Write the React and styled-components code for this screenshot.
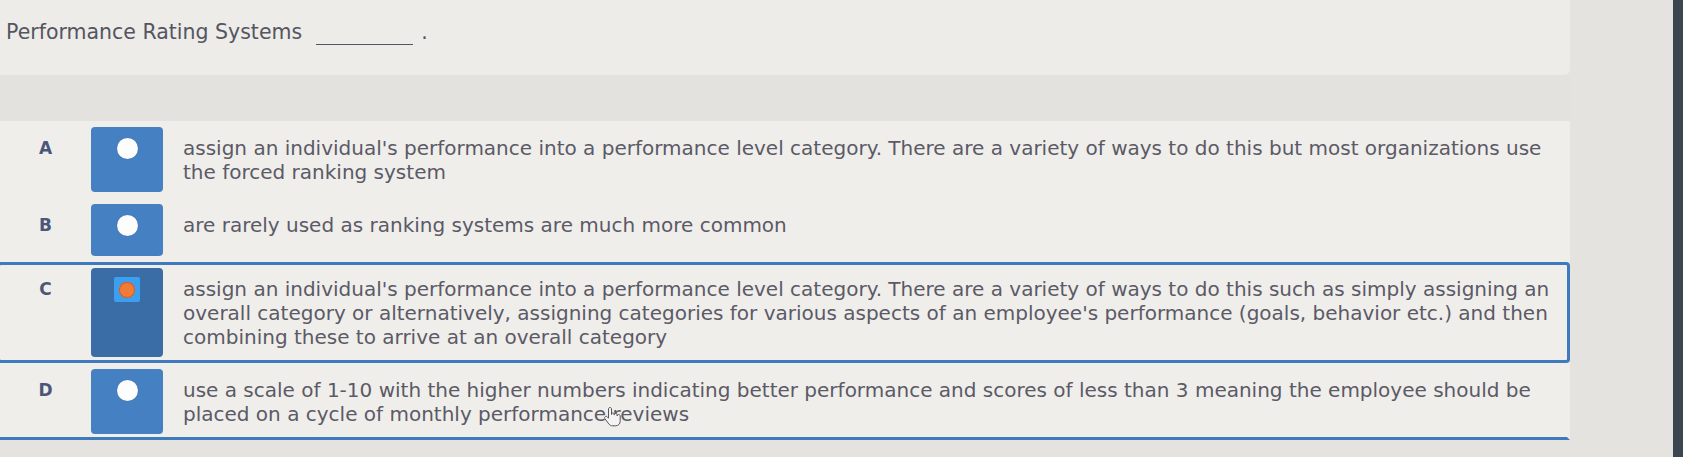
import styled, { createGlobalStyle } from "styled-components"

const GlobalStyle = createGlobalStyle`
    html, body {
        margin: 0;
        padding: 0;
        background: #e4e3df;
    }
    body {
        font-family: "DejaVu Sans", Verdana, sans-serif;
    }
`

const Screen = styled.div`
    display: flex;
    width: 1683px;
    height: 457px;
    overflow: hidden;
    background: #e4e3df;
`

const Main = styled.main`
    position: relative;
    width: 1570px;
    display: flex;
    flex-direction: column;
`

const Margin = styled.div`
    flex: 1;
`

const Bezel = styled.div`
    width: 10px;
    background: #3b4651;
`

const TitleCard = styled.header`
    height: 75px;
    box-sizing: border-box;
    padding: 21px 0 0 6px;
    background: #edece9;
    border-bottom-right-radius: 6px;
    color: #55555f;
    font-size: 20.5px;
    line-height: 23px;
`

const Blank = styled.span`
    display: inline-block;
    width: 97px;
    margin: 0 8px 0 14px;
    border-bottom: 1px solid #55555f;
`

const Band = styled.div`
    height: 46px;
    background: #e3e2de;
`

const List = styled.ul`
    list-style: none;
    margin: 0 0 0 -3px;
    padding: 0;
`

const Row = styled.li`
    display: grid;
    grid-template-columns: 91px 72px 1fr;
    padding: 3px 0;
    background: #efeeeb;
    border: 3px solid ${(p) => (p.$selected ? "#3d7bbd" : "transparent")};
    border-bottom-color: ${(p) => (p.$selected || p.$focused ? "#3d7bbd" : "transparent")};
    border-radius: ${(p) => (p.$selected ? "4px" : "0")};
    box-shadow: ${(p) => (p.$divider ? "0 1px 0 #d5d4d0" : "none")};
`

const Letter = styled.span`
    padding-top: 9px;
    text-align: center;
    font-size: 17px;
    line-height: 24px;
    font-weight: bold;
    color: #4b5779;
`

const Choice = styled.div`
    display: flex;
    justify-content: center;
    align-items: flex-start;
    min-height: 52px;
    padding-top: ${(p) => (p.$checked ? "9px" : "11px")};
    box-sizing: border-box;
    border-radius: 4px;
    background: ${(p) => (p.$checked ? "#3a6da6" : "#4580c3")};
`

const Dot = styled.span`
    width: 21px;
    height: 21px;
    border-radius: 50%;
    background: #fdfdfd;
    box-shadow: 0 0 1px rgba(0, 0, 0, 0.25);
`

const CheckedFrame = styled.span`
    display: flex;
    align-items: center;
    justify-content: center;
    width: 26px;
    height: 25px;
    border-radius: 2px;
    background: #3d9ff0;
`

const CheckedDot = styled.span`
    width: 16px;
    height: 16px;
    border-radius: 50%;
    background: #f47a38;
    box-shadow: inset 0 0 0 1px #c9602c;
`

const Text = styled.p`
    margin: 0;
    padding: 9px 0 8px 20px;
    font-size: 20px;
    line-height: 24px;
    color: #5b5a66;
`

const Cursor = styled.svg`
    position: absolute;
    left: 604px;
    top: 406px;
`

const options = [
    {
        letter: "A",
        lines: [
            "assign an individual's performance into a performance level category. There are a variety of ways to do this but most organizations use",
            "the forced ranking system",
        ],
    },
    {
        letter: "B",
        lines: ["are rarely used as ranking systems are much more common"],
    },
    {
        letter: "C",
        checked: true,
        lines: [
            "assign an individual's performance into a performance level category. There are a variety of ways to do this such as simply assigning an",
            "overall category or alternatively, assigning categories for various aspects of an employee's performance (goals, behavior etc.) and then",
            "combining these to arrive at an overall category",
        ],
    },
    {
        letter: "D",
        focused: true,
        lines: [
            "use a scale of 1-10 with the higher numbers indicating better performance and scores of less than 3 meaning the employee should be",
            "placed on a cycle of monthly performance reviews",
        ],
    },
]

function App() {
    return (
        <Screen>
            <GlobalStyle />
            <Main>
                <TitleCard>
                    Performance Rating Systems<Blank>&nbsp;</Blank>.
                </TitleCard>
                <Band />
                <List>
                    {options.map((o) => (
                        <Row
                            key={o.letter}
                            $selected={o.checked}
                            $focused={o.focused}
                            $divider={o.letter === "A"}
                        >
                            <Letter>{o.letter}</Letter>
                            <Choice $checked={o.checked}>
                                {o.checked ? (
                                    <CheckedFrame>
                                        <CheckedDot />
                                    </CheckedFrame>
                                ) : (
                                    <Dot />
                                )}
                            </Choice>
                            <Text>
                                {o.lines.map((l, i) => (
                                    <span key={i}>
                                        {i > 0 && <br />}
                                        {l}
                                    </span>
                                ))}
                            </Text>
                        </Row>
                    ))}
                </List>
                <Cursor width="18" height="22" viewBox="0 0 18 22">
                    <path
                        d="M6 1.5c-.9 0-1.5.7-1.5 1.5v9.2l-1.3-1.4c-.6-.6-1.6-.6-2.2 0-.5.5-.6 1.3-.1 1.9l3.9 5.2c.9 1.2 2.3 1.9 3.8 1.9h3.1c2.5 0 4.5-2 4.5-4.5V10c0-.8-.7-1.5-1.5-1.5s-1.5.7-1.5 1.5V9c0-.8-.7-1.5-1.5-1.5S10.2 8.2 10.2 9v-.5c0-.8-.7-1.5-1.5-1.5S7.5 7.7 7.5 8.5V3c0-.8-.6-1.5-1.5-1.5z"
                        fill="#f4f4f4"
                        stroke="#555"
                        strokeWidth="1"
                    />
                </Cursor>
            </Main>
            <Margin />
            <Bezel />
        </Screen>
    )
}

export default App
